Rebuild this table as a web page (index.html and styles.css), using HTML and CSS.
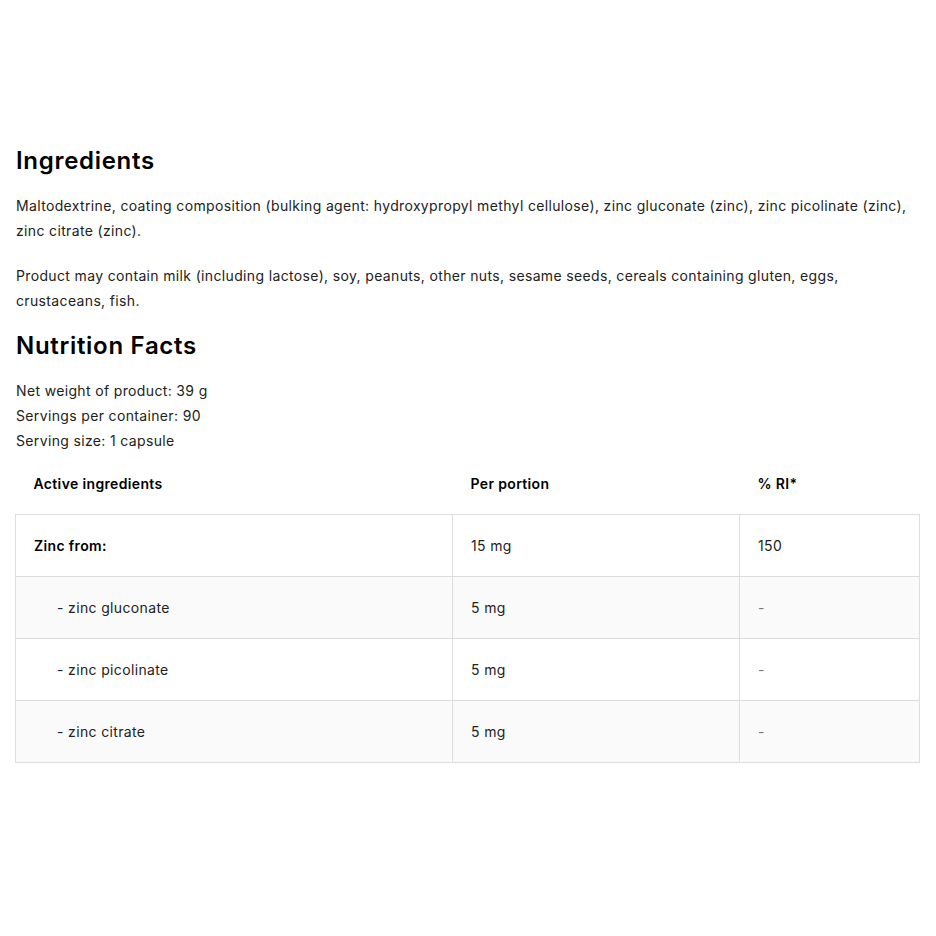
FILE: index.html
```html
<!DOCTYPE html>
<html lang="en">
<head>
<meta charset="utf-8">
<title>Ingredients</title>
<link rel="stylesheet" href="styles.css">
</head>
<body>
<main class="page">
  <h2 class="title">Ingredients</h2>
  <p class="text">Maltodextrine, coating composition (bulking agent: hydroxypropyl methyl cellulose), zinc gluconate (zinc), zinc picolinate (zinc), zinc citrate (zinc).</p>
  <p class="text gap">Product may contain milk (including lactose), soy, peanuts, other nuts, sesame seeds, cereals containing gluten, eggs, crustaceans, fish.</p>
  <h2 class="title second">Nutrition Facts</h2>
  <div class="text">Net weight of product: 39 g</div>
  <div class="text">Servings per container: 90</div>
  <div class="text">Serving size: 1 capsule</div>
  <table class="facts">
    <colgroup>
      <col class="c1"><col class="c2"><col class="c3">
    </colgroup>
    <thead>
      <tr><th>Active ingredients</th><th>Per portion</th><th>% RI*</th></tr>
    </thead>
    <tbody>
      <tr><td class="strong">Zinc from:</td><td>15 mg</td><td>150</td></tr>
      <tr class="alt"><td class="sub">- zinc gluconate</td><td>5 mg</td><td class="dash">-</td></tr>
      <tr><td class="sub">- zinc picolinate</td><td>5 mg</td><td class="dash">-</td></tr>
      <tr class="alt"><td class="sub">- zinc citrate</td><td>5 mg</td><td class="dash">-</td></tr>
    </tbody>
  </table>
</main>
</body>
</html>
```
FILE: styles.css
```css
html, body {
  margin: 0;
  padding: 0;
  background: #fff;
}
body {
  font-family: "Inter", "Noto Sans", sans-serif;
  color: #222;
  font-size: 14px;
  letter-spacing: 0.35px;
}
.page {
  padding: 146px 16px 0 16px;
}
.title {
  margin: 0 0 18px 0;
  font-size: 24px;
  line-height: 29px;
  font-weight: 600;
  color: #000;
  letter-spacing: 0.7px;
}
.title.second {
  margin-top: 18px;
}
.text {
  margin: 0;
  line-height: 25px;
}
.text.gap {
  margin-top: 20px;
}
.facts {
  margin-left: -1px;
  width: 904px;
  border-collapse: collapse;
  table-layout: fixed;
}
.c1 { width: 437px; }
.c2 { width: 287px; }
.c3 { width: 180px; }
.facts th {
  text-align: left;
  font-weight: 600;
  color: #000;
  height: 61px;
  padding: 0 0 0 18px;
  vertical-align: middle;
}
.facts td {
  border: 1px solid #ddd;
  height: 61px;
  padding: 0 0 0 18px;
  vertical-align: middle;
}
.facts .strong {
  font-weight: 600;
  color: #000;
}
.facts .sub {
  padding-left: 41px;
}
.facts .alt td {
  background: #fafafa;
}
.facts .dash {
  color: #777;
}
```
